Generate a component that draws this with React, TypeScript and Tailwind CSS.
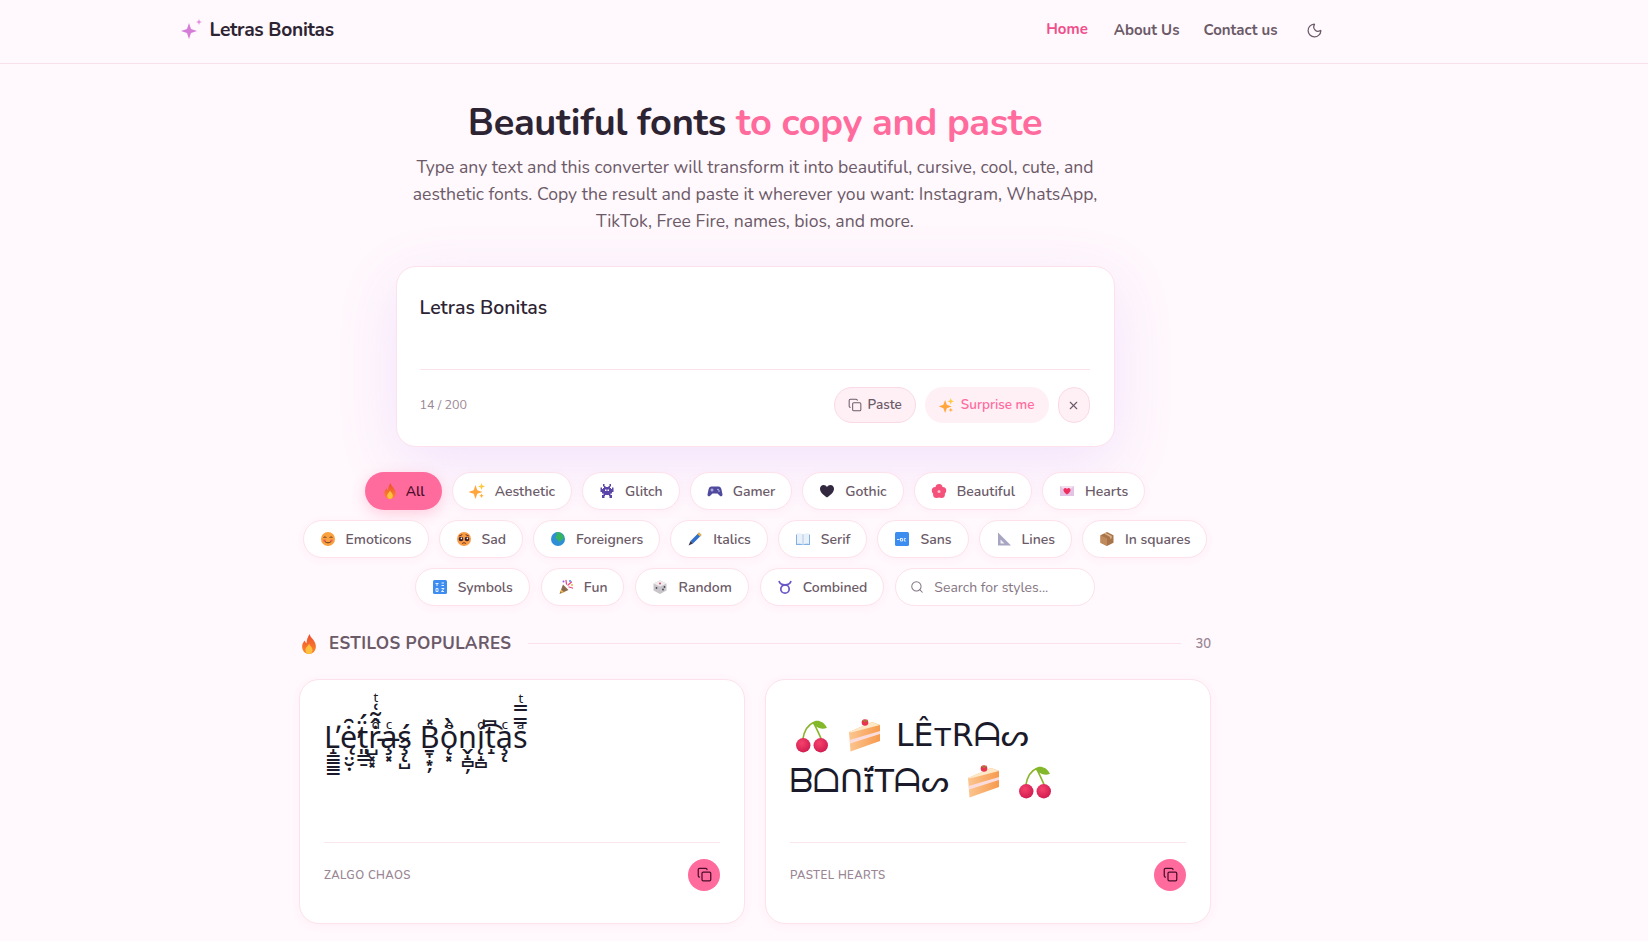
import { Copy, Moon, Search, X } from "lucide-react";
import type { ReactNode } from "react";

const font = "font-['Nunito','Noto_Sans','Open_Sans',sans-serif]";

// combining marks written out, the stacks are the content of this style
const zalgo =
    "L\u0315\u031D\u0333\u0333\u0333" +
    "e\u0315\u0307\u0311\u0328\u0324\u032E\u0323" +
    "t\u0344\u0348\u0347\u0320" +
    "r\u0369\u0307\u0302\u0303\u0351\u036D\u033A\u0353\u0353" +
    "a\u0368\u0327\u0336\u0353" +
    "s\u0301\u0327\u0337\u033A\u0328" +
    " " +
    "B\u033D\u0331\u031E\u0359\u0326" +
    "o\u0364\u0308\u0300\u0328\u0353" +
    "n\u032C\u031D\u033B\u0326" +
    "i\u0369\u0361\u031D\u033B\u0328" +
    "t\u0346\u031D" +
    "a\u0368\u0327\u0328" +
    "s\u0363\u033F\u033F\u036D";

function Sparkles({ size = 16 }: { size?: number }) {
    return (
        <svg width={size} height={size} viewBox="0 0 16 16">
            <path d="M6.500 2 8.300 7.200 13.500 9 8.300 10.800 6.500 16 4.700 10.800 -.5 9 4.700 7.200Z" fill="#ffa63d" />
            <path d="M12.500 0 13.400 2.600 16 3.500 13.400 4.400 12.500 7 11.600 4.400 9 3.500 11.600 2.600Z" fill="#ffc83d" />
            <path d="M12.500 10.500 13.200 12 14.800 12.800 13.200 13.500 12.500 15 11.800 13.500 10.200 12.800 11.800 12Z" fill="#ffb03d" />
        </svg>
    );
}

function Fire({ size = 16, id = "fire" }: { size?: number; id?: string }) {
    return (
        <svg width={size} height={size} viewBox="0 0 16 16">
            <defs>
                <linearGradient id={id} x1="0" y1="0" x2="0" y2="1">
                    <stop offset="0" stopColor="#ee4d2d" />
                    <stop offset="1" stopColor="#fb8a2e" />
                </linearGradient>
            </defs>
            <path d="M8.500 0c.3 3 5 5 5 10 0 3.500-2.500 6-5.500 6s-5.500-2.500-5.500-6c0-2.300 1.200-3.800 2.200-4.800.2 1.200.7 1.900 1.300 2.100C6 5 7 2.300 8.500 0Z" fill={`url(#${id})`} />
            <path d="M8 7.500c.5 1.700 2.800 2.700 2.800 5.200 0 1.900-1.200 3.300-2.800 3.300s-2.800-1.400-2.800-3.300c0-2.300 2.300-3.200 2.800-5.200Z" fill="#fdc03f" />
        </svg>
    );
}

function Emoji({ name }: { name: string }) {
    const icons: Record<string, ReactNode> = {
        fire: <Fire />,
        sparkles: <Sparkles />,
        invader: (
            <svg width="16" height="16" viewBox="0 0 16 16" fill="#5b45a8">
                <path d="M4 1h1.500v2h1v1h3V3h1V1H12v2.500h-1V5h1v1h1V4.500h1.500V9H13v1.500h-1.500V12H13v3h-2.500v-2H10v-1H6v1h-.5v2H3v-3h1.500v-1.500H3V9H1.500V4.500H3V6h1V5h1V3.500H4Z" />
                <rect x="6" y="6.500" width="1.500" height="1.500" fill="#fff" />
                <rect x="8.500" y="6.500" width="1.500" height="1.500" fill="#fff" />
            </svg>
        ),
        gamepad: (
            <svg width="16" height="16" viewBox="0 0 16 16">
                <path d="M4.500 3.500h7c1.600 0 2.500 1.100 3 3l1 5c.2 1.500-1.500 2.500-2.700 1.300L10.500 10.500h-5L3.200 12.800C2 14 .3 13 .5 11.500l1-5c.5-1.900 1.400-3 3-3Z" fill="#4f4a9e" />
                <rect x="3.500" y="6.500" width="3" height="1" fill="#c9c6ee" />
                <rect x="4.500" y="5.500" width="1" height="3" fill="#c9c6ee" />
                <circle cx="11" cy="6.500" r=".8" fill="#c9c6ee" />
                <circle cx="12" cy="8" r=".8" fill="#c9c6ee" />
            </svg>
        ),
        blackHeart: (
            <svg width="16" height="16" viewBox="0 0 16 16">
                <path d="M8 14.500C3 11 1 8.500 1 5.700 1 3.500 2.700 2 4.600 2 6 2 7.300 2.800 8 4c.7-1.200 2-2 3.400-2C13.300 2 15 3.500 15 5.700c0 2.800-2 5.300-7 8.800Z" fill="#32283f" />
            </svg>
        ),
        blossom: (
            <svg width="16" height="16" viewBox="0 0 16 16" fill="#f4517b">
                <circle cx="8" cy="4.500" r="3.500" />
                <circle cx="4.300" cy="7.500" r="3.500" />
                <circle cx="11.700" cy="7.500" r="3.500" />
                <circle cx="5.600" cy="11.500" r="3.500" />
                <circle cx="10.400" cy="11.500" r="3.500" />
                <circle cx="8" cy="8.500" r="1.500" fill="#ffc2d1" />
            </svg>
        ),
        loveLetter: (
            <svg width="16" height="16" viewBox="0 0 16 16">
                <rect x="1" y="3" width="14" height="10" fill="#e3c4e4" />
                <path d="M1 3h14L8 9Z" fill="#f3dff0" />
                <path d="M8 11.500C5.300 9.500 4.500 8.200 4.500 6.900 4.500 5.700 5.400 5 6.300 5c.7 0 1.300.4 1.700 1 .4-.6 1-1 1.700-1 .9 0 1.800.7 1.800 1.900 0 1.300-.8 2.600-3.500 4.600Z" fill="#ef2d5e" />
            </svg>
        ),
        smile: (
            <svg width="16" height="16" viewBox="0 0 16 16">
                <circle cx="8" cy="8" r="7" fill="#f9a13e" />
                <circle cx="4.500" cy="9.500" r="1.500" fill="#f7715a" />
                <circle cx="11.500" cy="9.500" r="1.500" fill="#f7715a" />
                <path d="M3.800 6.500c.6-1 1.700-1 2.300 0M9.900 6.500c.6-1 1.700-1 2.300 0M5 10.500c1.500 1.800 4.500 1.800 6 0" fill="none" stroke="#5a3020" strokeWidth="1" strokeLinecap="round" />
            </svg>
        ),
        pleading: (
            <svg width="16" height="16" viewBox="0 0 16 16">
                <circle cx="8" cy="8" r="7" fill="#f99b45" />
                <circle cx="5" cy="8" r="2.300" fill="#3a2330" />
                <circle cx="11" cy="8" r="2.300" fill="#3a2330" />
                <circle cx="5.400" cy="7.400" r=".8" fill="#fff" />
                <circle cx="11.400" cy="7.400" r=".8" fill="#fff" />
                <path d="M3.500 4.800 6 3.800M12.500 4.800 10 3.800M6.500 12.300c1-.8 2-.8 3 0" fill="none" stroke="#6a3020" strokeWidth="1" strokeLinecap="round" />
            </svg>
        ),
        globe: (
            <svg width="16" height="16" viewBox="0 0 16 16">
                <circle cx="8" cy="8" r="7" fill="#2f8fd6" />
                <path d="M6 1.500c3-.8 6 .5 7.500 3.500.5 1.500 0 3-1 3.500-1.500.5-1.500 2-3 2.500-1 0-1-2-2-2.500-1.500-.5-2.500-1.500-2-3 .5-1 1.500-1 1.500-2 0-.5-.5-1-1-2Z" fill="#35b35e" />
            </svg>
        ),
        pen: (
            <svg width="16" height="16" viewBox="0 0 16 16">
                <path d="M12 1.500 14.500 4 6 12.500 3.500 10Z" fill="#2f6fc9" />
                <path d="M12 1.500 14.500 4 13 5.500 10.500 3Z" fill="#f0b33d" />
                <path d="M3.500 10 6 12.500 1.500 14.500Z" fill="#3a3550" />
            </svg>
        ),
        book: (
            <svg width="16" height="16" viewBox="0 0 16 16">
                <path d="M1 3.500h14v10.500H1Z" fill="#7fb0e6" />
                <path d="M2 2.500c2-.4 4.500-.2 6 1 1.500-1.200 4-1.400 6-1V13c-2-.4-4.500-.2-6 .8-1.500-1-4-1.200-6-.8Z" fill="#e8f0fa" />
                <path d="M8 3.500v10.300" stroke="#a9bfdb" strokeWidth=".8" />
            </svg>
        ),
        abc: (
            <svg width="16" height="16" viewBox="0 0 16 16">
                <rect x="1" y="1" width="14" height="14" rx="1.500" fill="#3d8df0" />
                <path d="M3 8.500h2.500M6.500 7v3h2V7.500h-2M11.800 7.500h-1.500v2.500h1.500" fill="none" stroke="#dcebff" strokeWidth="1" />
            </svg>
        ),
        ruler: (
            <svg width="16" height="16" viewBox="0 0 16 16">
                <path d="M2 1.500 15 14.500H2Z" fill="#a7a5c2" />
                <path d="M4.500 8.500 8.500 12.500H4.500Z" fill="#f4f0f8" />
            </svg>
        ),
        box: (
            <svg width="16" height="16" viewBox="0 0 16 16">
                <path d="M8 1 14.500 4.200V11.800L8 15 1.500 11.800V4.200Z" fill="#a9744a" />
                <path d="M1.500 4.200 8 7.500V15L1.500 11.800Z" fill="#c08a5b" />
                <path d="M4.800 2.600 11.200 5.900V8L12.700 7.200V5.100L6.300 1.800Z" fill="#dcb58b" />
            </svg>
        ),
        symbols: (
            <svg width="16" height="16" viewBox="0 0 16 16">
                <rect x="1" y="1" width="14" height="14" rx="1.500" fill="#3d8df0" />
                <path d="M3.500 4.500h3M5 4.500v2.500M9.500 4h2.500M9.500 6.500h2.500M4 9.500h2v3H4ZM9.500 9.500h2.500l-2.500 3h2.500" fill="none" stroke="#e3efff" strokeWidth="1" />
            </svg>
        ),
        party: (
            <svg width="16" height="16" viewBox="0 0 16 16">
                <path d="M1.500 15 5 5.500 10.500 11Z" fill="#8a6a4d" />
                <path d="M3.200 10.500 6 13.300 4 14 2.500 12.500Z" fill="#f2b33d" />
                <path d="M8 1.500 8.500 5M13.500 3 10 6M14.500 9 11 8" stroke="#e8477f" strokeWidth="1.300" strokeLinecap="round" />
                <circle cx="12" cy="2" r="1" fill="#3d8df0" />
                <circle cx="14" cy="6" r="1" fill="#f2b33d" />
                <circle cx="5.500" cy="2.500" r="1" fill="#8b5cf6" />
            </svg>
        ),
        die: (
            <svg width="16" height="16" viewBox="0 0 16 16">
                <path d="M8 1.500 14.500 4.500V11.500L8 15 1.500 11.500V4.500Z" fill="#c8c5ca" />
                <path d="M1.500 4.500 8 1.500 14.500 4.500 8 7.500Z" fill="#efedf0" />
                <circle cx="8" cy="4.500" r=".9" fill="#d83a4d" />
                <circle cx="4.500" cy="9" r=".9" fill="#4a4450" />
                <circle cx="11" cy="10.500" r=".9" fill="#4a4450" />
                <circle cx="12.500" cy="8" r=".9" fill="#4a4450" />
            </svg>
        ),
        taurus: (
            <svg width="16" height="16" viewBox="0 0 16 16" fill="none" stroke="#6a55c8" strokeWidth="1.700">
                <circle cx="8" cy="10" r="4.200" />
                <path d="M2 2c.7 2.500 2.500 3.800 6 3.800S13.300 4.500 14 2" />
            </svg>
        ),
    };
    return <span className="flex h-4 w-4 shrink-0 items-center justify-center">{icons[name]}</span>;
}

function Cherries() {
    return (
        <svg width="34" height="34" viewBox="0 0 33 33" className="shrink-0">
            <defs>
                <radialGradient id="cherry" cx="0.4" cy="0.35" r="0.7">
                    <stop offset="0" stopColor="#f5426c" />
                    <stop offset="1" stopColor="#cf1b4f" />
                </radialGradient>
            </defs>
            <path d="M7.500 20C9 11 13 5.500 18 3.500M18 3.500c2.500 5 5 10 7.500 16" fill="none" stroke="#8bb42d" strokeWidth="1.600" />
            <path d="M17 3.500C20 .5 27 1 31 8.500 26.500 10.500 20 9 17 3.500Z" fill="#82b82a" />
            <circle cx="8" cy="25.500" r="7" fill="url(#cherry)" />
            <circle cx="25" cy="25.500" r="7" fill="url(#cherry)" />
        </svg>
    );
}

function Cake() {
    return (
        <svg width="33" height="33" viewBox="0 0 33 33" className="shrink-0">
            <defs>
                <linearGradient id="sponge" x1="0" y1="0" x2="1" y2="0">
                    <stop offset="0" stopColor="#fbc690" />
                    <stop offset="1" stopColor="#f79a4e" />
                </linearGradient>
            </defs>
            <path d="M1 13 24 3 32 6V22L2.500 32.500Z" fill="url(#sponge)" />
            <path d="M1.700 21 32 12V15L2 24.500Z" fill="#fbdcdc" />
            <path d="M1 13 24 3 32 6 3 13.500Z" fill="#fde8c8" />
            <circle cx="17" cy="3.500" r="3.300" fill="#e8344e" />
            <path d="M15 1 17 2.500 19.500 1" stroke="#79a82a" strokeWidth="1" fill="none" />
        </svg>
    );
}

function Chip({ icon, label, active }: { icon: string; label: string; active?: boolean }) {
    if (active) {
        return (
            <button className="flex h-[38px] items-center gap-2 rounded-full bg-[#ff6b9d] px-[17px] text-[14px] font-semibold whitespace-nowrap text-[#4a0d2a] shadow-[0_4px_14px_rgba(255,107,157,0.3)]">
                <Emoji name={icon} />
                {label}
            </button>
        );
    }
    return (
        <button className="flex h-[38px] items-center gap-2.5 rounded-full border border-[#fde2ec] bg-white px-[16px] text-[14px] font-semibold whitespace-nowrap text-[#6b5a68] shadow-[0_2px_8px_rgba(255,107,157,0.05)]">
            <Emoji name={icon} />
            {label}
        </button>
    );
}

function StyleCard({ label, children }: { label: string; children: ReactNode }) {
    return (
        <div className="flex h-[245px] flex-col rounded-[20px] border border-[#fde2ec] bg-white px-6 pt-1 shadow-[0_2px_10px_rgba(255,107,157,0.05)]">
            <div className="h-[159px] border-b border-[#fae6ef]">{children}</div>
            <div className="flex flex-1 items-start justify-between pt-4">
                <span className="pt-[8px] text-[11.5px] font-semibold tracking-[0.4px] text-[#9a8694] uppercase">{label}</span>
                <button className="flex h-8 w-8 items-center justify-center rounded-full bg-[#ff6b9d] text-[#4a0d2a]">
                    <Copy size={15} strokeWidth={2} />
                </button>
            </div>
        </div>
    );
}

export default function App() {
    const row1 = [
        ["fire", "All"],
        ["sparkles", "Aesthetic"],
        ["invader", "Glitch"],
        ["gamepad", "Gamer"],
        ["blackHeart", "Gothic"],
        ["blossom", "Beautiful"],
        ["loveLetter", "Hearts"],
    ];
    const row2 = [
        ["smile", "Emoticons"],
        ["pleading", "Sad"],
        ["globe", "Foreigners"],
        ["pen", "Italics"],
        ["book", "Serif"],
        ["abc", "Sans"],
        ["ruler", "Lines"],
        ["box", "In squares"],
    ];
    const row3 = [
        ["symbols", "Symbols"],
        ["party", "Fun"],
        ["die", "Random"],
        ["taurus", "Combined"],
    ];

    return (
        <div className={`${font} h-[941px] overflow-hidden bg-[#fff8fc] text-[#2d2433]`}>
            <header className="h-[64px] border-b border-[#f9e1ec]">
                <div className="w-[1511px]">
                    <div className="mx-auto flex h-[63px] max-w-[1152px] items-center justify-between">
                        <div className="flex items-center gap-[7px]">
                            <svg width="22" height="24" viewBox="0 0 22 24" className="-mt-[5px] ml-[1px]">
                                <path d="M8 6 10 12 16 14 10 16 8 22 6 16 0 14 6 12Z" fill="#d57bd8" />
                                <path d="M18 2 18.800 4.200 21 5 18.800 5.800 18 8 17.200 5.800 15 5 17.200 4.200Z" fill="#e08adb" />
                            </svg>
                            <span className="-mt-[2px] text-[19.2px] font-bold tracking-[-0.3px] text-[#2d2433]">Letras Bonitas</span>
                        </div>
                        <nav className="-mt-[2px] flex items-center gap-6 pr-[9px] text-[15px] font-bold text-[#6b5a68]">
                            <a className="-mt-[2px] mr-[2px] text-[#ef4f8b]">Home</a>
                            <a>About Us</a>
                            <a>Contact us</a>
                            <Moon size={17} strokeWidth={1.75} className="ml-[4px]" />
                        </nav>
                    </div>
                </div>
            </header>

            <main className="w-[1510px]">
                <div className="mx-auto flex max-w-[912px] flex-col items-center">
                    <h1 className="mt-[35px] text-[38px] leading-[48px] font-bold tracking-[-0.33px]">
                        Beautiful fonts <span className="text-[#ff6b9d]">to copy and paste</span>
                    </h1>
                    <p className="mt-[7px] w-[690px] text-center text-[17.6px] leading-[27px] text-[#6b5a68]">
                        Type any text and this converter will transform it into beautiful, cursive, cool, cute, and aesthetic fonts. Copy the result and paste it wherever you want: Instagram, WhatsApp, TikTok, Free Fire, names, bios, and more.
                    </p>

                    <div className="mt-[31px] h-[181px] w-[719px] rounded-[20px] border border-[#fde2ec] bg-white pt-[26px] pr-6 pl-[23px] shadow-[0_16px_60px_rgba(180,120,255,0.16)]">
                        <div className="h-[77px] border-b border-[#fbe3ec] text-[19.5px] font-semibold">Letras Bonitas</div>
                        <div className="mt-[17px] flex items-center justify-between">
                            <span className="text-[12.5px] text-[#9a8694]">14 / 200</span>
                            <div className="flex items-center gap-[9px] text-[13.5px] font-semibold">
                                <button className="flex h-9 items-center gap-1.5 rounded-full border border-[#fbd9e6] bg-[#fff0f6] px-[13px] text-[#6b5a68]">
                                    <Copy size={14} strokeWidth={1.75} />
                                    Paste
                                </button>
                                <button className="flex h-9 items-center gap-[7px] rounded-full bg-[#fff0f6] px-[14px] text-[#ff6b9d]">
                                    <Sparkles size={15} />
                                    Surprise me
                                </button>
                                <button className="flex h-9 w-[32px] items-center justify-center rounded-full border border-[#fbd9e6] bg-[#fff0f6] text-[#6b5a68]">
                                    <X size={13} strokeWidth={2} />
                                </button>
                            </div>
                        </div>
                    </div>

                    <div className="mt-[25px] flex w-full flex-col items-center gap-[10px]">
                        <div className="flex items-center gap-[10px]">
                            {row1.map(([icon, label]) => (
                                <Chip key={label} icon={icon} label={label} active={label === "All"} />
                            ))}
                        </div>
                        <div className="flex items-center gap-[10px]">
                            {row2.map(([icon, label]) => (
                                <Chip key={label} icon={icon} label={label} />
                            ))}
                        </div>
                        <div className="flex items-center gap-[11px]">
                            {row3.map(([icon, label]) => (
                                <Chip key={label} icon={icon} label={label} />
                            ))}
                            <div className="flex h-[38px] w-[200px] items-center gap-2.5 rounded-full border border-[#fde2ec] bg-white px-[14px] text-[14px] text-[#857583]">
                                <Search size={14} strokeWidth={1.75} />
                                Search for styles...
                            </div>
                        </div>
                    </div>

                    <div className="mt-[25px] flex w-full items-center">
                        <Fire size={20} id="fire-section" />
                        <span className="ml-[10px] text-[17px] font-bold tracking-[0.4px] text-[#6b5a68]">ESTILOS POPULARES</span>
                        <div className="mr-[14px] ml-[17px] h-px flex-1 bg-[#fae1eb]" />
                        <span className="pt-[1px] text-[13px] font-semibold text-[#9a8694]">30</span>
                    </div>

                    <div className="mt-[22px] grid w-full grid-cols-2 gap-5">
                        <StyleCard label="Zalgo chaos">
                            <p className="mt-[32px] font-['Noto_Sans','DejaVu_Sans',sans-serif] text-[30.5px] leading-[40px] text-[#1a1a2a]">{zalgo}</p>
                        </StyleCard>
                        <StyleCard label="Pastel hearts">
                            <div className="flex flex-col gap-[12px] pt-[35px] font-['DejaVu_Sans',sans-serif] text-[31.5px] leading-[33px] text-[#1a1a2a]">
                                <div className="flex items-center gap-[19px] pl-[5px]">
                                    <Cherries />
                                    <Cake />
                                    <span className="-ml-[4px]">LÊᴛRᗩᔕ</span>
                                </div>
                                <div className="flex items-center gap-[18px]">
                                    <span>{"ᗷᗝᑎ\u026A\u0308\u0301Tᗩᔕ"}</span>
                                    <Cake />
                                    <Cherries />
                                </div>
                            </div>
                        </StyleCard>
                    </div>
                </div>
            </main>
        </div>
    );
}
